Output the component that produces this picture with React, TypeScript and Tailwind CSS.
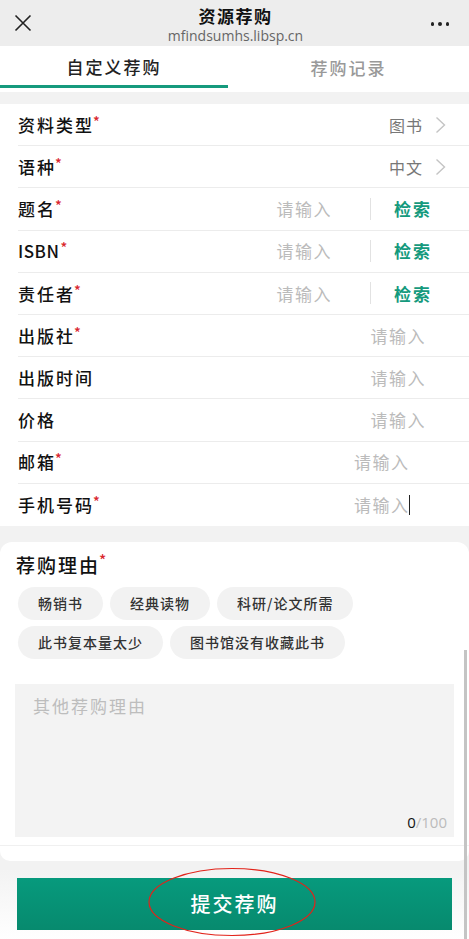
import React from 'react';

const rows = [
  { label: '资料类型', req: true, kind: 'select', value: '图书' },
  { label: '语种', req: true, kind: 'select', value: '中文' },
  { label: '题名', req: true, kind: 'search' },
  { label: 'ISBN', req: true, kind: 'search', latin: true },
  { label: '责任者', req: true, kind: 'search' },
  { label: '出版社', req: true, kind: 'input' },
  { label: '出版时间', req: false, kind: 'input' },
  { label: '价格', req: false, kind: 'input' },
  { label: '邮箱', req: true, kind: 'input2' },
  { label: '手机号码', req: true, kind: 'input2', cursor: true },
];

const reasons = [
  ['畅销书', '经典读物', '科研/论文所需'],
  ['此书复本量太少', '图书馆没有收藏此书'],
];

const Chevron = () => (
  <svg width="11" height="18" viewBox="0 0 11 18" fill="none" stroke="#c4c4c4" strokeWidth="1.4">
    <path d="M1.5 1.5 L9.5 9 L1.5 16.5" />
  </svg>
);

const App: React.FC = () => {
  return (
    <div
      className="w-[469px] h-[939px] overflow-hidden bg-[#f2f2f2] relative"
      style={{ fontFamily: '"Noto Sans CJK SC", "Noto Sans", sans-serif' }}
    >
      {/* top bar */}
      <div className="h-[46px] bg-[#ededed] flex items-start justify-between px-[14px]">
        <svg className="mt-[14px]" width="18" height="18" viewBox="0 0 18 18" stroke="#222" strokeWidth="1.6">
          <path d="M1.5 1.5 L16.5 16.5 M16.5 1.5 L1.5 16.5" />
        </svg>
        <div className="flex flex-col items-center pt-[6px] pl-[8px]">
          <div className="text-[17px] font-bold text-[#111] leading-[20px] tracking-[1.5px]">资源荐购</div>
          <div className="text-[14px] text-[#666] leading-[16px] mt-[2px]" style={{ fontFamily: '"Open Sans", sans-serif' }}>
            mfindsumhs.libsp.cn
          </div>
        </div>
        <div className="flex gap-[4px] items-center w-[18px] mr-[6px] mt-[22px]">
          <span className="w-[4px] h-[4px] rounded-full bg-[#222]" />
          <span className="w-[4px] h-[4px] rounded-full bg-[#222]" />
          <span className="w-[4px] h-[4px] rounded-full bg-[#222]" />
        </div>
      </div>

      {/* tabs */}
      <div className="h-[46px] bg-white flex">
        <div className="w-[228px] flex flex-col items-center justify-end">
          <div className="text-[17px] text-[#222] font-medium leading-[22px] mb-[7px] tracking-[2px]">自定义荐购</div>
          <div className="h-[3px] w-full bg-[#159a7d] mb-[4px]" />
        </div>
        <div className="flex-1 flex items-center justify-center pb-[2px]">
          <div className="text-[17px] text-[#999] font-medium tracking-[2px]">荐购记录</div>
        </div>
      </div>

      {/* form rows */}
      <div className="mt-[12px] bg-white">
        {rows.map((r, i) => (
          <div key={r.label} className="pl-[18px]">
            <div
              className={`h-[42.2px] flex items-center ${i < rows.length - 1 ? 'border-b border-[#ececec]' : ''}`}
            >
              <div
                className={`flex-1 text-[17px] font-medium text-[#111] flex items-start ${r.latin ? 'tracking-[0.5px]' : 'tracking-[2px]'}`}
              >
                {r.label}
                {r.req && (
                  <span className={`text-[#d9262c] text-[14px] leading-[18px] ${r.latin ? 'ml-[1px]' : '-ml-[1px]'}`}>*</span>
                )}
              </div>
              {r.kind === 'select' && (
                <div className="flex items-center mr-[23px]">
                  <span className="text-[16px] text-[#777] mr-[12px] tracking-[1px]">{r.value}</span>
                  <Chevron />
                </div>
              )}
              {r.kind === 'search' && (
                <div className="flex items-center">
                  <span className="text-[17px] text-[#bbb] mr-[38px] tracking-[1.5px]">请输入</span>
                  <span className="w-px h-[22px] bg-[#e2e2e2]" />
                  <span className="text-[17px] font-bold text-[#159a7d] ml-[23px] mr-[37px] tracking-[2px]">检索</span>
                </div>
              )}
              {r.kind === 'input' && (
                <span className="text-[17px] text-[#bbb] mr-[43px] tracking-[1.5px]">请输入</span>
              )}
              {r.kind === 'input2' && (
                <div className="flex items-center mr-[59px]">
                  <span className="text-[17px] text-[#bbb] tracking-[1.5px]">请输入</span>
                  <span className={`w-[1.5px] h-[20px] -ml-[1px] ${r.cursor ? 'bg-[#222]' : 'bg-transparent'}`} />
                </div>
              )}
            </div>
          </div>
        ))}
      </div>

      {/* reason card */}
      <div className="mt-[16px] bg-white rounded-t-[12px] pt-[10px] pb-[8px]">
        <div className="pl-[16px] text-[19px] font-medium text-[#111] flex items-start leading-[26px] tracking-[2px]">
          荐购理由<span className="text-[#d9262c] text-[15px] leading-[16px] -ml-[1px]">*</span>
        </div>
        <div className="px-[18px] mt-[9px] flex flex-col gap-[6px]">
          {reasons.map((line, li) => (
            <div key={li} className="flex gap-[7px]">
              {line.map((t) => (
                <span
                  key={t}
                  className="h-[33px] px-[20px] rounded-full bg-[#f2f2f2] text-[14px] text-[#333] flex items-center font-medium tracking-[1px]"
                >
                  {t}
                </span>
              ))}
            </div>
          ))}
        </div>
        <div className="mx-[15px] mt-[25px] h-[153px] bg-[#f3f3f3] relative">
          <div className="absolute left-[18px] top-[9px] text-[17px] text-[#bdbdbd] tracking-[2px]">其他荐购理由</div>
          <div className="absolute right-[7px] bottom-[3px] text-[15px]" style={{ fontFamily: '"Open Sans", sans-serif' }}>
            <span className="text-[#111]">0</span>
            <span className="text-[#bbb]">/100</span>
          </div>
        </div>
      </div>
      <div className="h-[1px] bg-[#f0f0f0]" />
      <div className="h-[15px] bg-white rounded-b-[10px]" />

      {/* bottom button */}
      <div className="mt-[9px] h-[70px] bg-gradient-to-b from-[#f3f3f3] to-white px-[17px] pt-[8px]">
        <div className="w-[435px] h-[52px] bg-gradient-to-b from-[#079a7d] to-[#078a6e] flex items-center justify-center">
          <span className="text-[20px] text-white font-medium tracking-[2px]">提交荐购</span>
        </div>
      </div>

      {/* red annotation ellipse */}
      <svg className="absolute left-0 top-0 pointer-events-none" width="469" height="939">
        <ellipse cx="232" cy="902" rx="83" ry="33.5" fill="none" stroke="#e2231a" strokeWidth="1.2" />
      </svg>

      {/* scrollbar */}
      <div className="absolute right-[2px] top-[650px] w-[3px] h-[289px] bg-[#c4c4c4]" />
    </div>
  );
};

export default App;
